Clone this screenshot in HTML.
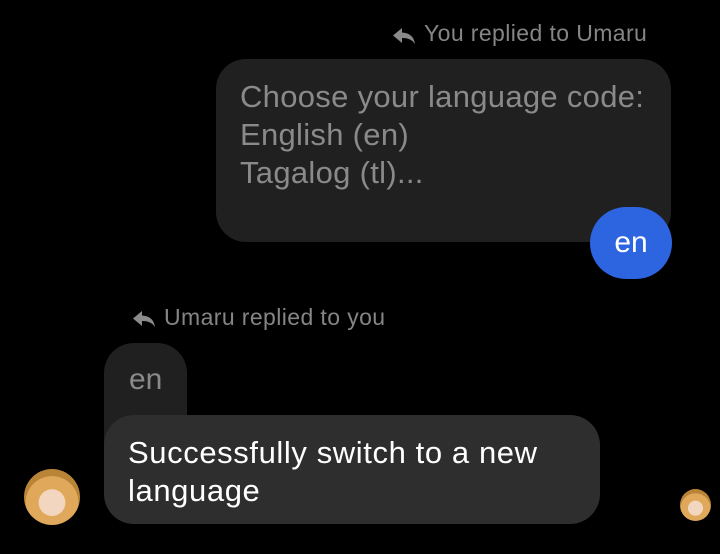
<!DOCTYPE html>
<html><head><style>
html,body{margin:0;padding:0;background:#000;width:720px;height:554px;overflow:hidden;position:relative;font-family:"Liberation Sans",Roboto,sans-serif}
.a{position:absolute}
.lbl{color:#858585;font-size:23px;white-space:nowrap;letter-spacing:0.4px}
</style></head><body>
<svg class="a" style="left:392px;top:26px" width="24" height="20" viewBox="0 0 24 20"><path d="M10 2 L1 9.5 L10 17 V12 C16 12 20 13.5 23 18 C22 11 18 7 10 6.5 Z" fill="#8a8a8a"/></svg>
<div class="a lbl" style="left:424px;top:20px">You replied to Umaru</div>
<div class="a" style="left:216px;top:59px;width:455px;height:183px;background:#202020;border-radius:30px"></div>
<div class="a" style="left:240px;top:78px;color:#8a8a8a;font-size:31px;line-height:38px;letter-spacing:0.3px;white-space:nowrap">Choose your language code:<br>English (en)<br>Tagalog (tl)...</div>
<div class="a" style="left:590px;top:207px;width:82px;height:72px;background:#2d64e0;border-radius:36px;color:#fff;font-size:30px;line-height:72px;text-align:center">en</div>
<svg class="a" style="left:132px;top:309px" width="24" height="20" viewBox="0 0 24 20"><path d="M10 2 L1 9.5 L10 17 V12 C16 12 20 13.5 23 18 C22 11 18 7 10 6.5 Z" fill="#8a8a8a"/></svg>
<div class="a lbl" style="left:164px;top:304px">Umaru replied to you</div>
<div class="a" style="left:104px;top:343px;width:83px;height:100px;background:#202020;border-radius:30px 30px 0 0"></div>
<div class="a" style="left:129px;top:363px;color:#8a8a8a;font-size:30px">en</div>
<div class="a" style="left:104px;top:415px;width:496px;height:109px;background:#2e2e2e;border-radius:30px"></div>
<div class="a" style="left:128px;top:434px;color:#fff;font-size:31px;line-height:38px;letter-spacing:0.6px;white-space:nowrap">Successfully switch to a new<br>language</div>
<div class="a" style="left:24px;top:469px;width:56px;height:56px;border-radius:50%;background:radial-gradient(circle at 50% 60%,#f3d6bf 0 30%,#e0a85a 31% 60%,#b98436 61%)"></div>
<div class="a" style="left:680px;top:489px;width:31px;height:32px;border-radius:50%;background:radial-gradient(circle at 50% 60%,#f3d6bf 0 30%,#e0a85a 31% 60%,#b98436 61%)"></div>
</body></html>
